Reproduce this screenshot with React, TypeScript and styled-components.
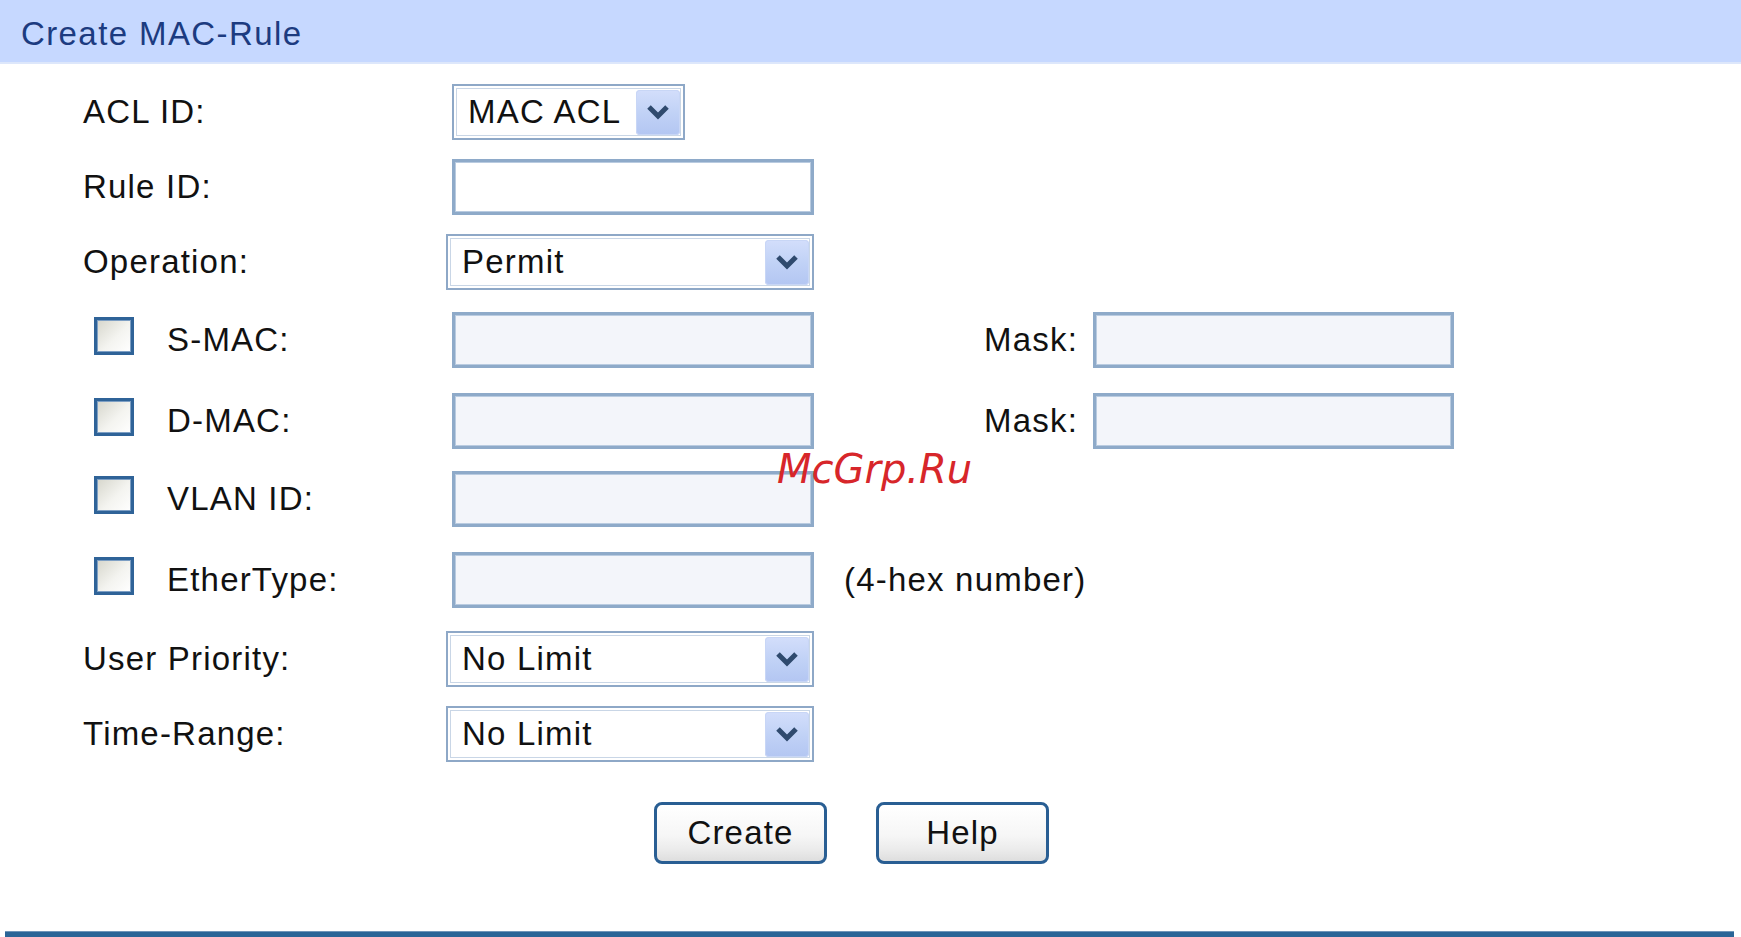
import React from "react";
import styled, { createGlobalStyle } from "styled-components";

const GlobalStyle = createGlobalStyle`
  html, body {
    margin: 0;
    padding: 0;
    background: #ffffff;
    font-family: "Liberation Sans", Arial, sans-serif;
  }
`;

const Page = styled.div`
  position: relative;
  width: 1741px;
  height: 937px;
  overflow: hidden;
  display: flex;
  flex-direction: column;
  & > * {
    flex-shrink: 0;
  }
`;

const Header = styled.div`
  height: 62px;
  background: #c6d8ff;
  border-bottom: 2px solid #dde7fb;
  display: flex;
  align-items: center;
  padding-left: 21px;
`;

const Title = styled.span`
  font-size: 33px;
  letter-spacing: 1.4px;
  color: #1c3b80;
  margin-top: 6px;
`;

const Form = styled.div`
  display: flex;
  flex-direction: column;
  padding: 20px 0 0 83px;
`;

const Row = styled.div<{ $gap?: number }>`
  display: flex;
  align-items: center;
  height: 56px;
  flex-shrink: 0;
  margin-top: ${(p) => p.$gap ?? 0}px;
`;

const LabelCell = styled.div`
  width: 363px;
  display: flex;
  align-items: center;
  flex: none;
`;

const Label = styled.span<{ $indent?: number }>`
  font-size: 33px;
  letter-spacing: 1.2px;
  color: #111111;
  margin-left: ${(p) => p.$indent ?? 0}px;
`;

const Check = styled.input.attrs({ type: "checkbox" })`
  appearance: none;
  margin: 0 0 8px 11px;
  width: 40px;
  height: 38px;
  box-sizing: border-box;
  border: 3px solid #2f6398;
  box-shadow: inset 0 0 0 1px #7d9fc4;
  background: linear-gradient(135deg, #d6d6cc 0%, #f4f4f0 55%, #ffffff 100%);
  flex: none;
`;

const TextBox = styled.input<{ $plain?: boolean; $width?: number; $inset?: number }>`
  box-sizing: border-box;
  width: ${(p) => p.$width ?? 362}px;
  height: 56px;
  margin: 0 0 0 ${(p) => p.$inset ?? 6}px;
  border: 3px solid #8eaac9;
  box-shadow: inset 0 0 0 1px #b9cbe0;
  background: ${(p) => (p.$plain ? "#ffffff" : "#f3f5fa")};
  outline: none;
  flex: none;
`;

const SelectBox = styled.div<{ $width: number; $inset?: number }>`
  box-sizing: border-box;
  width: ${(p) => p.$width}px;
  height: 56px;
  margin-left: ${(p) => p.$inset ?? 0}px;
  border: 2px solid #8ea8c7;
  box-shadow: inset 0 0 0 2px #ffffff, inset 0 0 0 3px #c9d6e6;
  background: #ffffff;
  display: flex;
  align-items: center;
  justify-content: space-between;
  padding: 0 3px 0 14px;
  flex: none;
`;

const SelectText = styled.span`
  font-size: 33px;
  letter-spacing: 1.2px;
  color: #111111;
`;

const ArrowButton = styled.span`
  width: 44px;
  height: 45px;
  border-radius: 4px;
  background: linear-gradient(180deg, #d3defb 0%, #c1d2f6 50%, #b3c6f2 100%);
  box-shadow: inset 0 0 0 1px #c8d6f6;
  display: flex;
  align-items: center;
  justify-content: center;
`;

const MaskLabel = styled(Label)`
  width: 264px;
  text-align: right;
  margin-right: 15px;
`;

const Hint = styled(Label)`
  margin-left: 30px;
`;

const ButtonRow = styled.div`
  display: flex;
  gap: 49px;
  margin-top: 40px;
  padding-left: 571px;
  flex-shrink: 0;
`;

const Button = styled.button`
  box-sizing: border-box;
  width: 173px;
  height: 62px;
  border: 3px solid #295e93;
  border-radius: 8px;
  background: linear-gradient(180deg, #ffffff 0%, #f6f6f6 55%, #ebebeb 80%, #dedede 100%);
  font-family: "Liberation Sans", Arial, sans-serif;
  font-size: 33px;
  letter-spacing: 1.2px;
  color: #111111;
  padding: 0;
  cursor: pointer;
`;

const BottomBar = styled.div`
  height: 10px;
  margin: 67px 7px 0 5px;
  background: #2a6597;
  border-top: 1px solid #6f95b9;
`;

// watermark stamped over the form
const Watermark = styled.span`
  position: absolute;
  left: 777px;
  top: 449px;
  font-family: "DejaVu Sans", sans-serif;
  font-style: oblique;
  font-size: 40px;
  line-height: 40px;
  color: #d7262a;
  pointer-events: none;
`;

const Chevron = () => (
  <svg width="24" height="16" viewBox="0 0 24 16">
    <path d="M3 3 L12 12 L21 3" fill="none" stroke="#2f4a6e" strokeWidth="5" />
  </svg>
);

const Select: React.FC<{ value: string; width: number; inset?: number }> = ({ value, width, inset }) => (
  <SelectBox $width={width} $inset={inset}>
    <SelectText>{value}</SelectText>
    <ArrowButton>
      <Chevron />
    </ArrowButton>
  </SelectBox>
);

const checkRows = [
  { label: "S-MAC:", gap: 22, mask: true },
  { label: "D-MAC:", gap: 25, mask: true },
  { label: "VLAN ID:", gap: 22, mask: false },
  { label: "EtherType:", gap: 25, mask: false, hint: "(4-hex number)" },
];

export default function App() {
  return (
    <Page>
      <GlobalStyle />
      <Header>
        <Title>Create MAC-Rule</Title>
      </Header>
      <Form>
        <Row>
          <LabelCell>
            <Label>ACL ID:</Label>
          </LabelCell>
          <Select value="MAC ACL" width={233} inset={6} />
        </Row>
        <Row $gap={19}>
          <LabelCell>
            <Label>Rule ID:</Label>
          </LabelCell>
          <TextBox $plain />
        </Row>
        <Row $gap={19}>
          <LabelCell>
            <Label>Operation:</Label>
          </LabelCell>
          <Select value="Permit" width={368} />
        </Row>
        {checkRows.map((r) => (
          <Row key={r.label} $gap={r.gap}>
            <LabelCell>
              <Check />
              <Label $indent={33}>{r.label}</Label>
            </LabelCell>
            <TextBox />
            {r.mask && (
              <>
                <MaskLabel>Mask:</MaskLabel>
                <TextBox $width={361} $inset={0} />
              </>
            )}
            {r.hint && <Hint>{r.hint}</Hint>}
          </Row>
        ))}
        <Row $gap={23}>
          <LabelCell>
            <Label>User Priority:</Label>
          </LabelCell>
          <Select value="No Limit" width={368} />
        </Row>
        <Row $gap={19}>
          <LabelCell>
            <Label>Time-Range:</Label>
          </LabelCell>
          <Select value="No Limit" width={368} />
        </Row>
        <ButtonRow>
          <Button>Create</Button>
          <Button>Help</Button>
        </ButtonRow>
      </Form>
      <BottomBar />
      <Watermark>McGrp.Ru</Watermark>
    </Page>
  );
}
